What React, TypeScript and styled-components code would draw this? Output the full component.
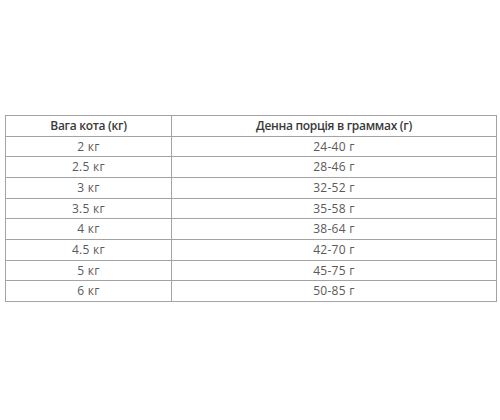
import React from "react";
import styled, { createGlobalStyle } from "styled-components";

type Row = {
  weight: string;
  portion: string;
};

const rows: Row[] = [
  { weight: "2 кг", portion: "24-40 г" },
  { weight: "2.5 кг", portion: "28-46 г" },
  { weight: "3 кг", portion: "32-52 г" },
  { weight: "3.5 кг", portion: "35-58 г" },
  { weight: "4 кг", portion: "38-64 г" },
  { weight: "4.5 кг", portion: "42-70 г" },
  { weight: "5 кг", portion: "45-75 г" },
  { weight: "6 кг", portion: "50-85 г" },
];

const GlobalStyle = createGlobalStyle`
  html, body {
    margin: 0;
    padding: 0;
    background: #ffffff;
    font-family: "Open Sans", "Noto Sans", sans-serif;
  }
`;

const Page = styled.div`
  width: 500px;
  height: 420px;
  box-sizing: border-box;
  padding: 115px 6px 0 5px;
`;

const Table = styled.table`
  width: 489px;
  border-collapse: collapse;
  table-layout: fixed;
`;

const HeadCell = styled.th<{ wide?: boolean }>`
  width: ${({ wide }) => (wide ? "324px" : "165px")};
  border: 1px solid #a3a3a3;
  padding: 3px 0;
  line-height: 13.67px;
  font-size: 12px;
  font-weight: 600;
  letter-spacing: -0.3px;
  color: #3a3a3a;
  text-align: center;
`;

const Cell = styled.td`
  border: 1px solid #a3a3a3;
  padding: 3px 0;
  line-height: 13.67px;
  font-size: 12px;
  color: #5a5a5a;
  letter-spacing: 0.3px;
  text-align: center;
`;

export default function App() {
  return (
    <Page>
      <GlobalStyle />
      <Table>
        <thead>
          <tr>
            <HeadCell>Вага кота (кг)</HeadCell>
            <HeadCell wide>Денна порція в граммах (г)</HeadCell>
          </tr>
        </thead>
        <tbody>
          {rows.map((row) => (
            <tr key={row.weight}>
              <Cell>{row.weight}</Cell>
              <Cell>{row.portion}</Cell>
            </tr>
          ))}
        </tbody>
      </Table>
    </Page>
  );
}
